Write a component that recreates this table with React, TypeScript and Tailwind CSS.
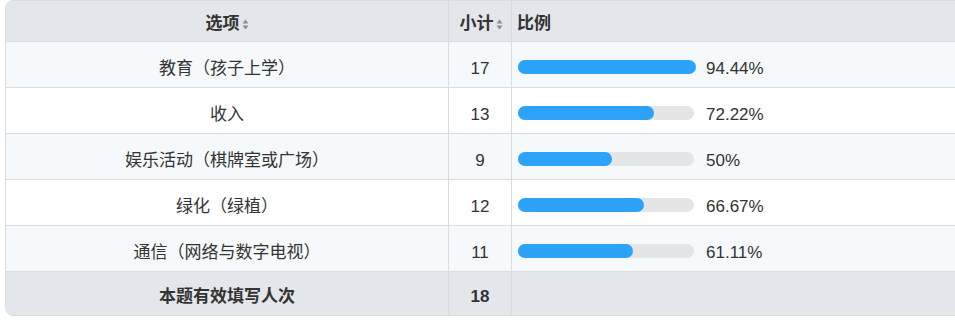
import React from "react";

const rows = [
  { label: "教育（孩子上学）", count: 17, pct: 94.44, text: "94.44%" },
  { label: "收入", count: 13, pct: 72.22, text: "72.22%" },
  { label: "娱乐活动（棋牌室或广场）", count: 9, pct: 50, text: "50%" },
  { label: "绿化（绿植）", count: 12, pct: 66.67, text: "66.67%" },
  { label: "通信（网络与数字电视）", count: 11, pct: 61.11, text: "61.11%" },
];

function SortIcon() {
  return (
    <svg width="7" height="11" viewBox="0 0 7 11" className="ml-[2px] shrink-0">
      <path d="M3.5 0.5 L6.5 4.5 L0.5 4.5 Z" fill="#8e8e8e" />
      <path d="M3.5 10.5 L6.5 6.5 L0.5 6.5 Z" fill="#8e8e8e" />
    </svg>
  );
}

export default function App() {
  return (
    <div
      className="w-[955px] h-[321px] overflow-hidden bg-white text-[#333] pl-[5px]"
      style={{ fontFamily: '"Liberation Sans", Arial, "Noto Sans CJK SC", sans-serif' }}
    >
      <div className="w-[1000px] border border-[#dadde0] rounded-lg overflow-hidden text-[17px]">
        {/* Header */}
        <div className="grid grid-cols-[442px_63px_1fr] h-[41px] bg-[#e3e6ea] border-b border-[#dadde0] font-bold">
          <div className="flex items-center justify-center pt-[6px]">
            选项
            <SortIcon />
          </div>
          <div className="flex items-center justify-center border-l border-[#dadde0] pt-[6px] pl-[2px]">
            小计
            <SortIcon />
          </div>
          <div className="flex items-center border-l border-[#dadde0] pl-[5px] pt-[6px]">比例</div>
        </div>

        {/* Rows */}
        {rows.map((r, i) => (
          <div
            key={r.label}
            className={`grid grid-cols-[442px_63px_1fr] h-[46px] border-b border-[#dadde0] ${
              i % 2 === 0 ? "bg-[#f5f9fc]" : "bg-white"
            }`}
          >
            <div className="flex items-center justify-center pt-[8px]">{r.label}</div>
            <div className="flex items-center justify-center border-l border-[#dadde0] pt-[8px]">
              {r.count}
            </div>
            <div className="flex items-center border-l border-[#dadde0] pl-[6px] pt-[4px]">
              <div className="relative w-[176px] h-[14px] rounded-full bg-[#e4e5e7]">
                <div
                  className="absolute left-0 top-0 h-[14px] rounded-full bg-[#2ca3f9]"
                  style={{ width: `${r.pct * 1.885}px` }}
                />
              </div>
              <span className="ml-[12px] pt-[5px]">{r.text}</span>
            </div>
          </div>
        ))}

        {/* Footer */}
        <div className="grid grid-cols-[442px_63px_1fr] h-[43px] bg-[#e3e6ea] font-bold">
          <div className="flex items-center justify-center pt-[7px]">本题有效填写人次</div>
          <div className="flex items-center justify-center border-l border-[#dadde0] pt-[7px]">18</div>
          <div className="border-l border-[#dadde0]" />
        </div>
      </div>
    </div>
  );
}
